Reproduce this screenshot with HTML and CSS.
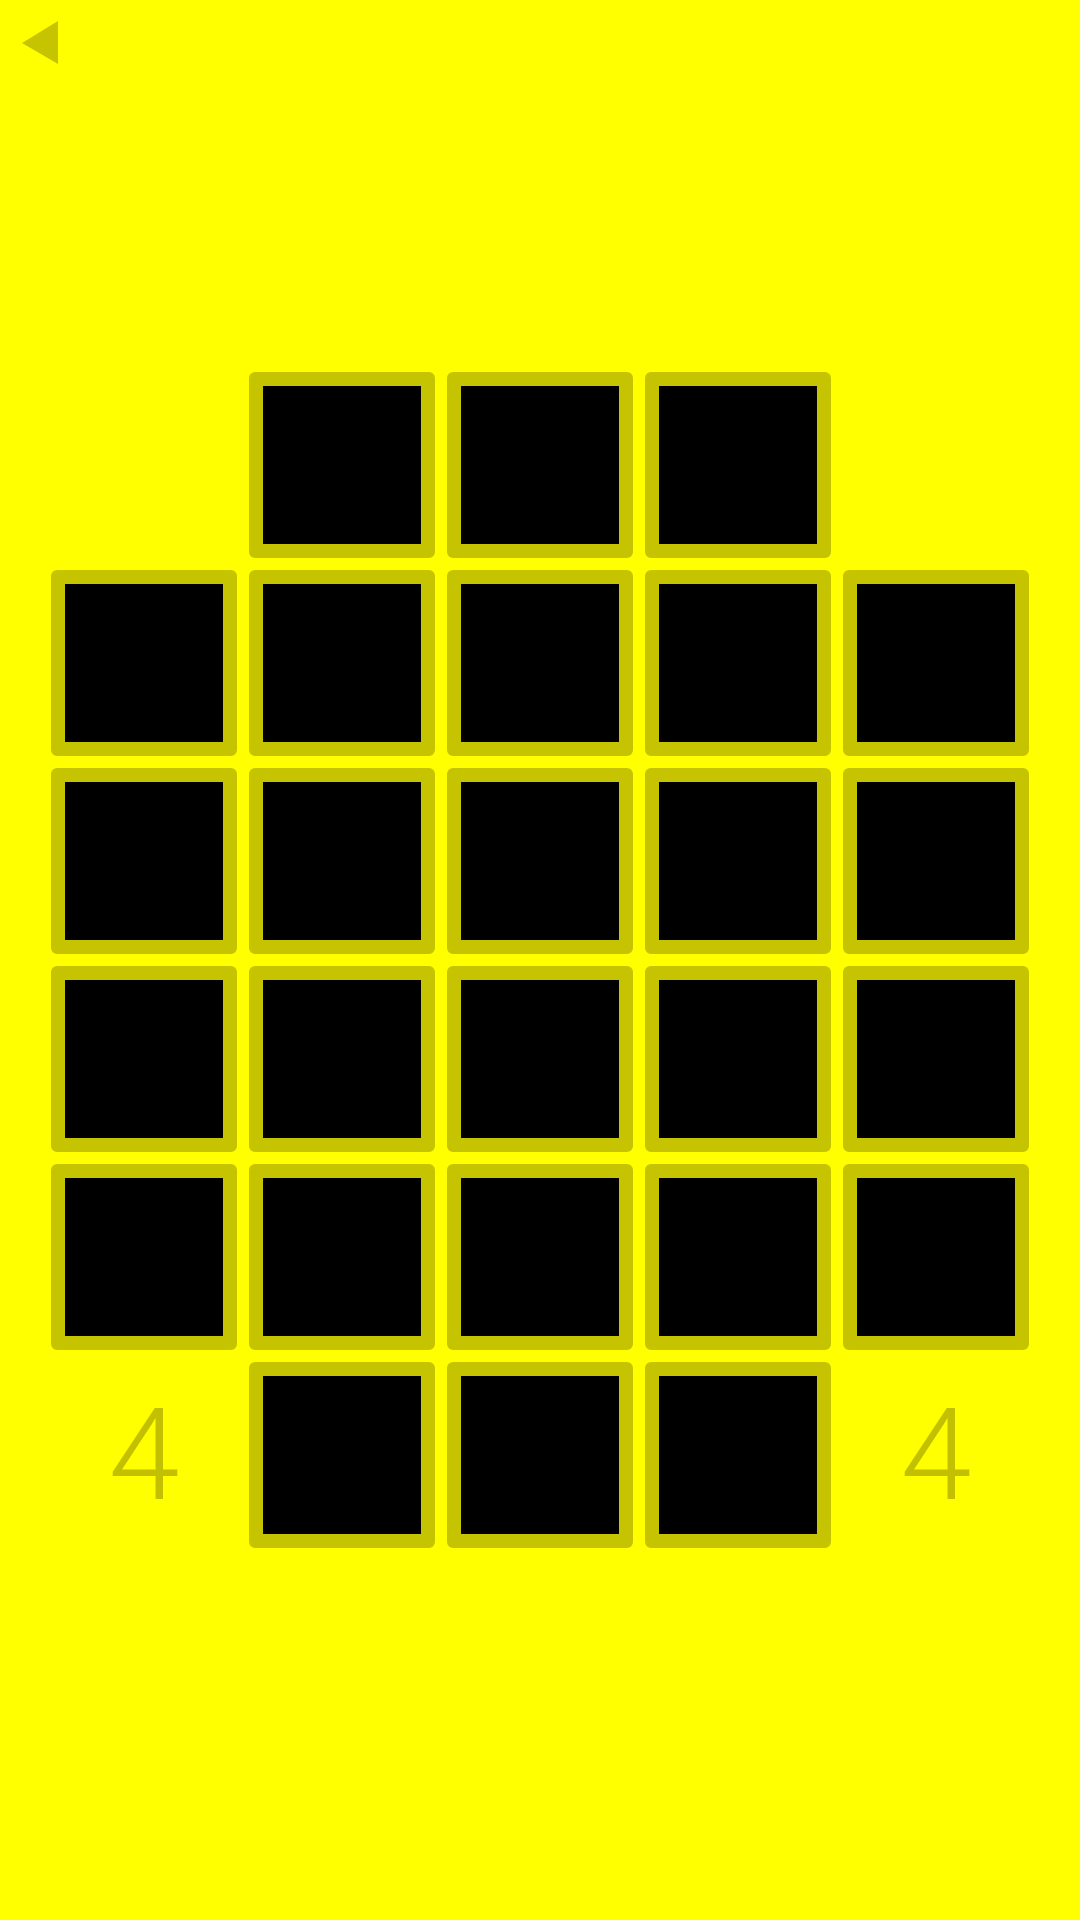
FILE: index.html
```html
<!DOCTYPE html>
<html>
<head>
<meta charset="utf-8">
<link rel="stylesheet" href="styles.css">
</head>
<body>
<div class="screen">
  <button class="back" aria-label="Back">
    <svg width="40" height="46" viewBox="0 0 40 46"><polygon points="2,23 38,1 38,44" fill="#c6c400"/></svg>
  </button>
  <div class="board">
    <div class="slot"></div>
    <div class="cell"></div>
    <div class="cell"></div>
    <div class="cell"></div>
    <div class="slot"></div>

    <div class="cell"></div>
    <div class="cell"></div>
    <div class="cell"></div>
    <div class="cell"></div>
    <div class="cell"></div>

    <div class="cell"></div>
    <div class="cell"></div>
    <div class="cell"></div>
    <div class="cell"></div>
    <div class="cell"></div>

    <div class="cell"></div>
    <div class="cell"></div>
    <div class="cell"></div>
    <div class="cell"></div>
    <div class="cell"></div>

    <div class="cell"></div>
    <div class="cell"></div>
    <div class="cell"></div>
    <div class="cell"></div>
    <div class="cell"></div>

    <div class="slot count">4</div>
    <div class="cell"></div>
    <div class="cell"></div>
    <div class="cell"></div>
    <div class="slot count">4</div>
  </div>
</div>
</body>
</html>
```
FILE: styles.css
```css
html, body {
  margin: 0;
  padding: 0;
  background: #ffff00;
}
.screen {
  position: relative;
  width: 1080px;
  height: 1920px;
  display: flex;
  align-items: center;
  justify-content: center;
  font-family: Roboto, "Liberation Sans", sans-serif;
}
.back {
  position: absolute;
  left: 20px;
  top: 20px;
  padding: 0;
  margin: 0;
  border: 0;
  background: transparent;
  width: 40px;
  height: 46px;
  display: block;
}
.back svg {
  display: block;
}
.board {
  display: grid;
  grid-template-columns: repeat(5, 186px);
  grid-auto-rows: 186px;
  gap: 12px;
}
.cell {
  box-sizing: border-box;
  width: 186px;
  height: 186px;
  background: #000;
  border: 14px solid #c6c400;
  border-radius: 6px;
}
.slot {
  width: 186px;
  height: 186px;
}
.count {
  display: flex;
  align-items: center;
  justify-content: center;
  color: #c2c000;
  font-size: 128px;
  font-weight: 300;
  line-height: 1;
}
```
